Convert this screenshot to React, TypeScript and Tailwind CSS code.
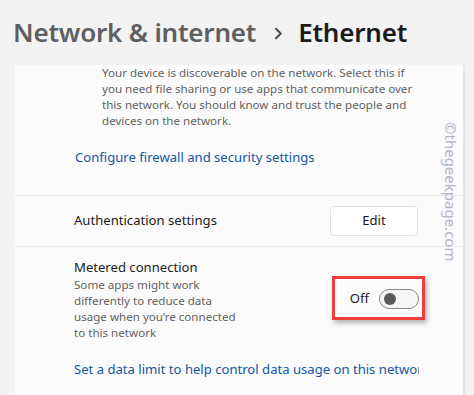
export default function App(): JSX.Element {
  const font = { fontFamily: '"Noto Sans", "Open Sans", sans-serif' };
  return (
    <div className="relative w-[474px] h-[395px] overflow-hidden bg-[#f3f3f3]" style={font}>
      {/* breadcrumb header */}
      <div className="h-[65px] flex items-center pl-[13px] text-[26px] font-semibold tracking-[-0.2px]">
        <span className="text-[#5f5f5f]">Network &amp; internet</span>
        <svg className="ml-[18px] mr-[15px] mt-[2px]" width="9" height="13" viewBox="0 0 9 13" fill="none">
          <path d="M2 1.8 L6.8 6.5 L2 11.2" stroke="#4a4a4a" strokeWidth="2" strokeLinecap="round" strokeLinejoin="round" />
        </svg>
        <span className="text-[#1b1b1b]">Ethernet</span>
      </div>

      {/* card */}
      <div className="ml-[15px] w-[450px] h-[330px] bg-[#fbfbfb] border-r-2 border-[#e6e6e6]">
        <div className="border-b border-[#ebebeb] pb-[28px]">
          <p className="pl-[87px] pr-[40px] text-[11.6px] leading-[16px] text-[#626262]">
            Your device is discoverable on the network. Select this if you need file sharing or use apps that communicate over this network. You should know and trust the people and devices on the network.
          </p>
          <div className="pl-[60px] mt-[18px] text-[13.1px] leading-[20px] text-[#1356a6]">
            Configure firewall and security settings
          </div>
        </div>

        <div className="h-[51px] flex items-center justify-between pl-[59px] pr-[45px] border-b border-[#ebebeb]">
          <span className="text-[13.1px] text-[#1b1b1b]">Authentication settings</span>
          <button className="w-[88px] h-[30px] rounded-[4px] bg-white border border-[#e3e3e3] text-[13.1px] text-[#1b1b1b]">
            Edit
          </button>
        </div>

        <div className="pt-[10px] pl-[59px] pr-[44px]">
          <div className="flex justify-between">
            <div>
              <div className="text-[13.1px] leading-[20px] text-[#1b1b1b]">Metered connection</div>
              <p className="w-[166px] text-[11.6px] leading-[16px] text-[#626262]">
                Some apps might work differently to reduce data usage when you&rsquo;re connected to this network
              </p>
            </div>
            <div className="relative mt-[32px] h-[20px] flex items-center gap-[10px]">
              <span className="text-[13.1px] text-[#1b1b1b]">Off</span>
              <div className="w-[40px] h-[20px] rounded-full border border-[#8a8a8a] bg-[#f6f6f6] flex items-center pl-[4px]">
                <div className="w-[12px] h-[12px] rounded-full bg-[#5a5a5a]" />
              </div>
              <div className="absolute right-[-6px] top-[-13px] w-[93px] h-[44px] border-[3px] border-[#ee3d3d] shadow-[2px_3px_5px_rgba(0,0,0,0.3)]" />
            </div>
          </div>
          <div className="mt-[18px] text-[13.1px] leading-[20px] text-[#1356a6] whitespace-nowrap overflow-hidden w-[345px]">
            Set a data limit to help control data usage on this network
          </div>
        </div>
      </div>

      {/* watermark */}
      <div className="absolute left-[445px] top-[122px] origin-top-left rotate-90 translate-x-[17px] text-[15px] text-[#b4b4c8] whitespace-nowrap">
        ©thegeekpage.com
      </div>
    </div>
  );
}
